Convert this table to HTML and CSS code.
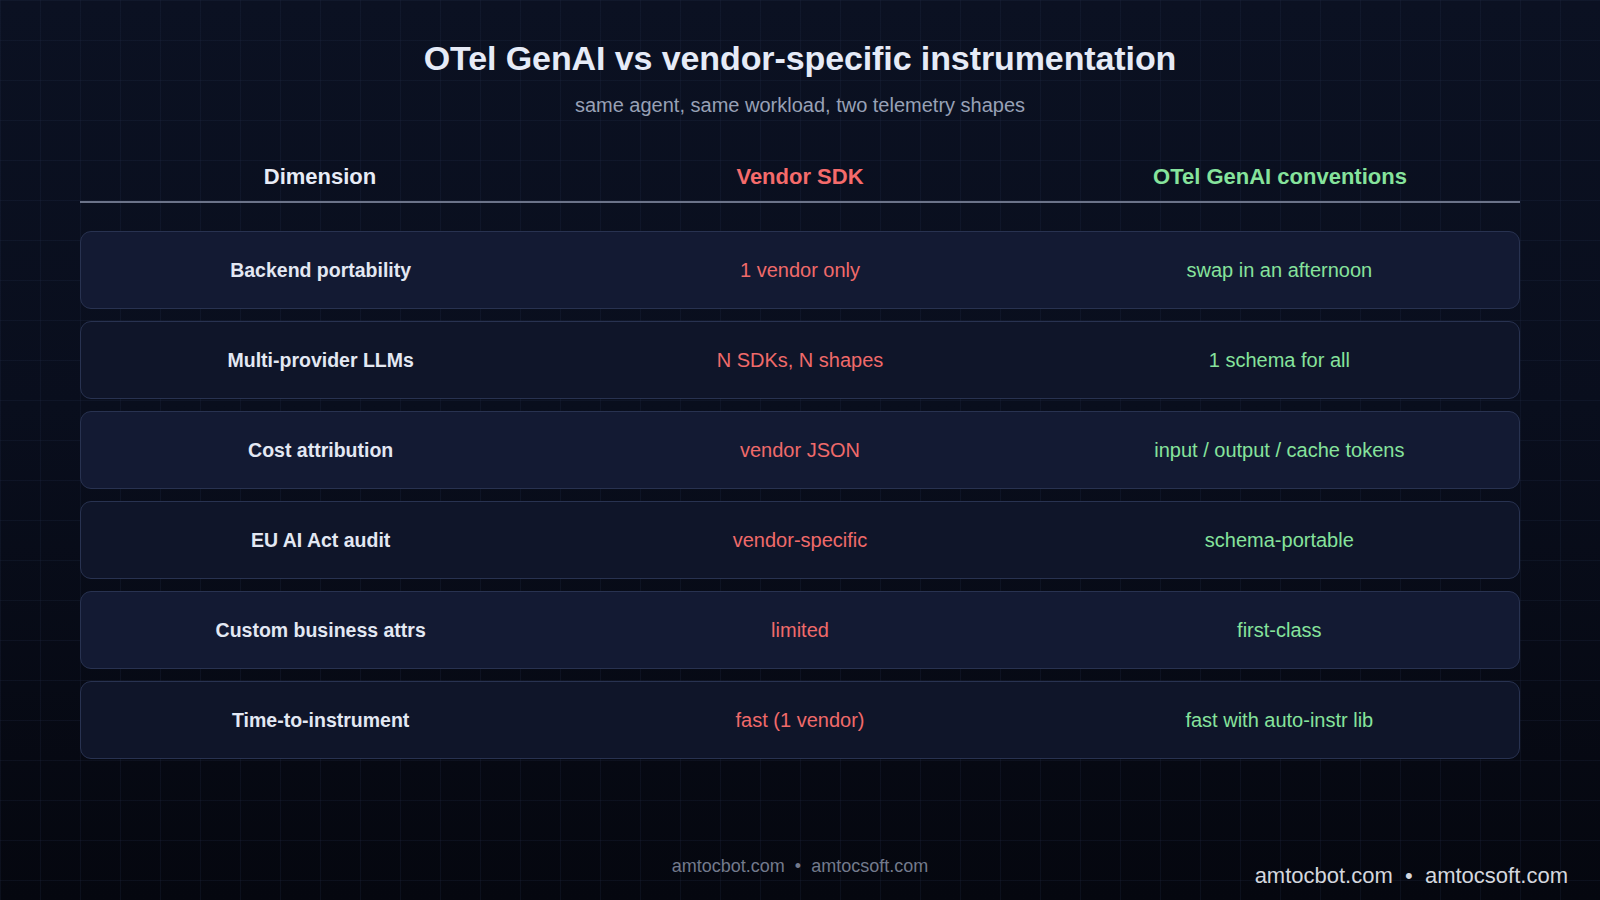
FILE: index.html
```html
<!DOCTYPE html>
<html lang="en">
<head>
<meta charset="utf-8">
<title>OTel GenAI vs vendor-specific instrumentation</title>
<link rel="stylesheet" href="styles.css">
</head>
<body>
<main class="slide">
  <header class="intro">
    <h1 class="title">OTel GenAI vs vendor-specific instrumentation</h1>
    <p class="subtitle">same agent, same workload, two telemetry shapes</p>
  </header>

  <section class="table">
    <div class="head">
      <div class="hcell">Dimension</div>
      <div class="hcell vendor">Vendor SDK</div>
      <div class="hcell otel">OTel GenAI conventions</div>
    </div>

    <div class="rows">
      <div class="row alt">
        <div class="cell label">Backend portability</div>
        <div class="cell vendor">1 vendor only</div>
        <div class="cell otel">swap in an afternoon</div>
      </div>
      <div class="row">
        <div class="cell label">Multi-provider LLMs</div>
        <div class="cell vendor">N SDKs, N shapes</div>
        <div class="cell otel">1 schema for all</div>
      </div>
      <div class="row alt">
        <div class="cell label">Cost attribution</div>
        <div class="cell vendor">vendor JSON</div>
        <div class="cell otel">input / output / cache tokens</div>
      </div>
      <div class="row">
        <div class="cell label">EU AI Act audit</div>
        <div class="cell vendor">vendor-specific</div>
        <div class="cell otel">schema-portable</div>
      </div>
      <div class="row alt">
        <div class="cell label">Custom business attrs</div>
        <div class="cell vendor">limited</div>
        <div class="cell otel">first-class</div>
      </div>
      <div class="row">
        <div class="cell label">Time-to-instrument</div>
        <div class="cell vendor">fast (1 vendor)</div>
        <div class="cell otel">fast with auto-instr lib</div>
      </div>
    </div>
  </section>

  <footer class="footer">amtocbot.com &nbsp;•&nbsp; amtocsoft.com</footer>
  <div class="watermark">amtocbot.com &nbsp;•&nbsp; amtocsoft.com</div>
</main>
</body>
</html>
```

FILE: styles.css
```css
* { box-sizing: border-box; margin: 0; padding: 0; }

html, body {
  width: 1600px;
  height: 900px;
  overflow: hidden;
}

body {
  font-family: "Liberation Sans", Arial, Helvetica, sans-serif;
  background-color: #080c18;
  background-image:
    linear-gradient(to right, rgba(40, 52, 84, 0.2) 1px, transparent 1px),
    linear-gradient(to bottom, rgba(40, 52, 84, 0.2) 1px, transparent 1px),
    linear-gradient(to bottom, #0b1122 0%, #090e1d 45%, #05070f 100%);
  background-size: 40px 40px, 40px 40px, 100% 100%;
  color: #e6ebf5;
}

.slide {
  position: relative;
  width: 1600px;
  height: 900px;
  display: flex;
  flex-direction: column;
  align-items: center;
  padding: 38px 80px 0;
}

.intro {
  display: flex;
  flex-direction: column;
  align-items: center;
}

.title {
  font-size: 34px;
  font-weight: 700;
  color: #e6ebf7;
  line-height: 40px;
  letter-spacing: -0.1px;
}

.subtitle {
  margin-top: 15px;
  font-size: 20px;
  color: #98a1b6;
  line-height: 24px;
}

.table {
  width: 1440px;
  margin-top: 39px;
  display: flex;
  flex-direction: column;
}

.head {
  display: grid;
  grid-template-columns: repeat(3, 1fr);
  height: 47px;
  align-items: center;
  padding-bottom: 4px;
  border-bottom: 2px solid #6b7389;
}

.hcell {
  text-align: center;
  font-size: 22px;
  font-weight: 700;
  color: #e8ecf6;
}

.hcell.vendor { color: #f56b6b; }
.hcell.otel { color: #86e39c; }

.rows {
  margin-top: 28px;
  display: flex;
  flex-direction: column;
  gap: 12px;
}

.row {
  display: grid;
  grid-template-columns: repeat(3, 1fr);
  align-items: center;
  height: 78px;
  border: 1px solid #283250;
  border-radius: 11px;
  background: #0f1529;
}

.row.alt { background: #131a33; }

.cell {
  text-align: center;
  font-size: 20px;
  line-height: 24px;
}

.cell.label {
  font-weight: 700;
  font-size: 19.5px;
  color: #e3e8f3;
}

.cell.vendor { color: #f06a6a; }
.cell.otel { color: #86e39c; }

.footer {
  margin-top: auto;
  margin-bottom: 23px;
  font-size: 18px;
  color: #737a8c;
}

.watermark {
  position: absolute;
  right: 32px;
  bottom: 11px;
  font-size: 22px;
  color: #d4d7de;
}
```
